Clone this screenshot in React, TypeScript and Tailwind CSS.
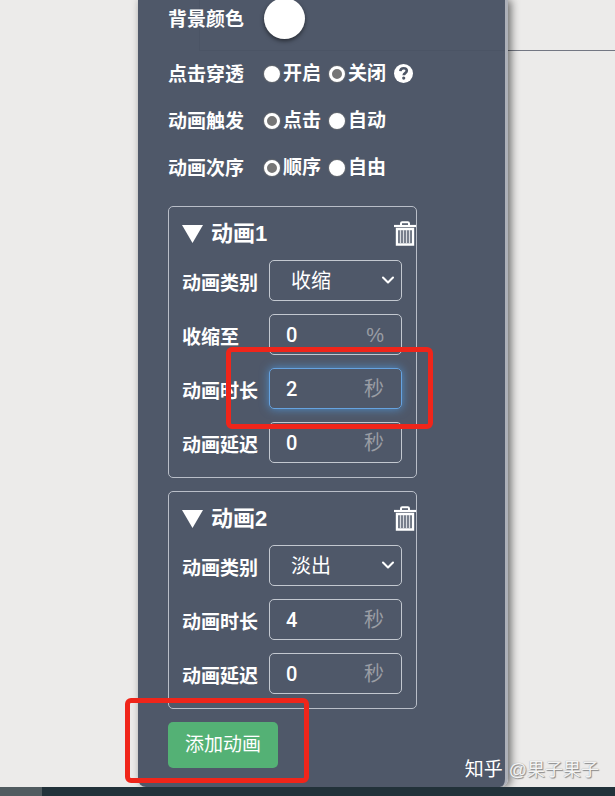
import { FC, ReactNode } from "react";
import { ChevronDown } from "lucide-react";
import clsx from "clsx";

type TField = {
  id: string;
  label: string;
  value: string;
  unit: string;
  active?: boolean;
};

type TAnimation = {
  name: string;
  type: string;
  fields: TField[];
};

const types = ["收缩", "淡出"];

const animations: TAnimation[] = [
  {
    name: "动画1",
    type: "收缩",
    fields: [
      { id: "a1-to", label: "收缩至", value: "0", unit: "%" },
      { id: "a1-time", label: "动画时长", value: "2", unit: "秒", active: true },
      { id: "a1-delay", label: "动画延迟", value: "0", unit: "秒" },
    ],
  },
  {
    name: "动画2",
    type: "淡出",
    fields: [
      { id: "a2-time", label: "动画时长", value: "4", unit: "秒" },
      { id: "a2-delay", label: "动画延迟", value: "0", unit: "秒" },
    ],
  },
];

const TrashIcon: FC = () => (
  <svg width="22" height="26" viewBox="0 0 22 26" fill="none" stroke="#fff">
    <path d="M7 4.5V2.4Q7 1.2 8.200 1.2h5.600Q15 1.2 15 2.4V4.5" strokeWidth="2" />
    <path d="M0 5h22" strokeWidth="2.2" />
    <path d="M3 8v15.500h16V8z" strokeWidth="2.4" />
    <path d="M6.500 9v14M9.500 9v14M12.500 9v14M15.500 9v14" stroke="#d9dce1" strokeWidth="1.6" />
  </svg>
);

const HelpIcon: FC = () => (
  <svg width="19" height="19" viewBox="0 0 19 19" fill="none">
    <circle cx="9.5" cy="9.5" r="9.5" fill="#fff" />
    <path
      d="M6.3 7.2C6.5 5.200 7.7 4.2 9.6 4.2c2 0 3.2 1 3.2 2.6 0 2.3-3.1 2.3-3.1 4.5"
      stroke="#4d5666"
      strokeWidth="2.6"
    />
    <circle cx="9.7" cy="14.1" r="1.6" fill="#4d5666" />
  </svg>
);

const RadioRow: FC<{
  name: string;
  label: string;
  options: string[];
  checked: string;
  children?: ReactNode;
}> = ({ name, label, options, checked, children }) => (
  <div
    role="radiogroup"
    aria-label={label}
    className="flex h-[47px] items-center gap-2 font-bold"
  >
    <span className="w-22 shrink-0 pt-0.5">{label}</span>
    {options.map((option) => (
      <label key={option} className="flex items-center gap-[3px] whitespace-nowrap">
        <input
          type="radio"
          name={name}
          defaultChecked={option === checked}
          className="size-4 appearance-none rounded-full border-3 border-white bg-white shadow-[0_0_1px_1px_rgba(118,118,118,0.6)] checked:bg-[#767676]"
        />
        {option}
      </label>
    ))}
    {children}
  </div>
);

const controlClass = "h-[41px] rounded-[5px] border text-xl leading-6";
const labelClass = "w-[87px] shrink-0 pt-1.5 font-bold";

const AnimationCard: FC<{ item: TAnimation }> = ({ item }) => (
  <section className="max-w-[249px] rounded-[5px] border border-[#b9bec8] pr-3.5 pb-3.5 pl-[13px]">
    <div className="-mr-3.5 flex h-[53px] items-center justify-between">
      <button className="flex items-center gap-2 text-[22px] leading-7 font-bold">
        <svg width="21" height="18" viewBox="0 0 21 18">
          <path d="M0 0h21L10.5 18z" fill="#fff" />
        </svg>
        {item.name}
      </button>
      <button aria-label={"删除" + item.name}>
        <TrashIcon />
      </button>
    </div>
    <div className="flex flex-col gap-[13px]">
      <div className="flex items-center">
        <label htmlFor={item.name} className={labelClass}>
          动画类别
        </label>
        <div className="relative min-w-0 flex-1">
          <select
            id={item.name}
            defaultValue={item.type}
            className={clsx(
              controlClass,
              "w-full appearance-none border-[#c3c8d0] pl-[21px]"
            )}
          >
            {types.map((type) => (
              <option key={type}>{type}</option>
            ))}
          </select>
          <ChevronDown
            strokeWidth={2.5}
            className="pointer-events-none absolute top-2.5 right-1 size-5"
          />
        </div>
      </div>
      {item.fields.map((field) => (
        <div key={field.id} className="relative flex items-center">
          <label htmlFor={field.id} className={labelClass}>
            {field.label}
          </label>
          <div
            className={clsx(
              controlClass,
              "flex min-w-0 flex-1 items-center pr-[17px] pl-4",
              field.active
                ? "border-[#66a3e0] shadow-[0_0_10px_rgba(80,160,235,0.75)]"
                : "border-[#c3c8d0]"
            )}
          >
            <input
              id={field.id}
              defaultValue={field.value}
              className="w-full min-w-0 font-[Roboto] font-medium outline-none"
            />
            <span className="text-[#9a9da4]">{field.unit}</span>
          </div>
          {field.active && (
            <div className="pointer-events-none absolute -top-[21px] -right-[31px] -bottom-5 left-11 z-10 rounded-md border-5 border-[#f0251a]" />
          )}
        </div>
      ))}
    </div>
  </section>
);

export default function App() {
  return (
    <div className="flex min-h-screen flex-col bg-[#ecebea] font-['Liberation_Sans','Noto_Sans_CJK_SC',sans-serif] text-[19px] leading-6 text-white">
      <main className="relative grid flex-1 grid-cols-[138px_minmax(0,1fr)_107px] overflow-hidden">
        <div className="absolute top-0 right-0 left-[199px] h-[51px] border-b border-l border-[#737783]" />
        <form className="relative col-start-2 rounded-b-lg border-r-3 border-[#adb0b8] bg-[#495364]/97 px-[30px] pb-[19px] shadow-[3px_0_8px_rgba(0,0,0,0.55)]">
          <div className="mb-3.5 flex h-9 items-center gap-2 font-bold">
            <span className="w-22 shrink-0 pt-1">背景颜色</span>
            <button
              type="button"
              aria-label="背景颜色"
              className="size-[41px] shrink-0 rounded-full bg-white shadow-[0_2px_4px_rgba(0,0,0,0.5)]"
            />
          </div>
          <RadioRow name="through" label="点击穿透" options={["开启", "关闭"]} checked="关闭">
            <HelpIcon />
          </RadioRow>
          <RadioRow name="trigger" label="动画触发" options={["点击", "自动"]} checked="点击" />
          <RadioRow name="order" label="动画次序" options={["顺序", "自由"]} checked="顺序" />
          <div className="mt-[15px] flex flex-col gap-[13px]">
            {animations.map((item) => (
              <AnimationCard key={item.name} item={item} />
            ))}
            <div className="relative self-start">
              <button
                type="button"
                className="h-[46px] rounded-[5px] bg-[#54b175] px-[17px]"
              >
                添加动画
              </button>
              <div className="pointer-events-none absolute -top-6 -right-[31px] -bottom-[15px] -left-[43px] rounded-md border-5 border-[#f0251a]" />
            </div>
          </div>
        </form>
        <div className="absolute right-4 bottom-0.5 flex items-center gap-1.5 text-lg">
          <span className="text-[19px]">知乎</span>
          <span className="text-[#f4f4f4] [text-shadow:1px_1px_1px_#888,0_0_1px_#999]">
            @果子果子
          </span>
        </div>
      </main>
      <footer className="flex h-[9px] bg-[#22323a]">
        <div className="w-[42px] bg-[#505b60]" />
      </footer>
    </div>
  );
}
